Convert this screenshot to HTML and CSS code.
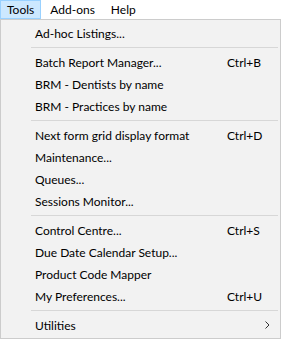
FILE: index.html
```html
<!DOCTYPE html>
<html>
<head>
<meta charset="utf-8">
<link rel="stylesheet" href="styles.css">
</head>
<body>
<div class="menubar">
  <div class="top active">Tools</div>
  <div class="top">Add-ons</div>
  <div class="top">Help</div>
</div>
<div class="dropdown">
  <div class="item"><span class="label">Ad-hoc Listings...</span><span class="key"></span></div>
  <div class="sep"></div>
  <div class="item"><span class="label">Batch Report Manager...</span><span class="key">Ctrl+B</span></div>
  <div class="item"><span class="label">BRM - Dentists by name</span><span class="key"></span></div>
  <div class="item"><span class="label">BRM - Practices by name</span><span class="key"></span></div>
  <div class="sep"></div>
  <div class="item"><span class="label">Next form grid display format</span><span class="key">Ctrl+D</span></div>
  <div class="item"><span class="label">Maintenance...</span><span class="key"></span></div>
  <div class="item"><span class="label">Queues...</span><span class="key"></span></div>
  <div class="item"><span class="label">Sessions Monitor...</span><span class="key"></span></div>
  <div class="sep"></div>
  <div class="item"><span class="label">Control Centre...</span><span class="key">Ctrl+S</span></div>
  <div class="item"><span class="label">Due Date Calendar Setup...</span><span class="key"></span></div>
  <div class="item"><span class="label">Product Code Mapper</span><span class="key"></span></div>
  <div class="item"><span class="label">My Preferences...</span><span class="key">Ctrl+U</span></div>
  <div class="sep"></div>
  <div class="item"><span class="label">Utilities</span><span class="key arrow"><svg width="5" height="8" viewBox="0 0 5 8"><path d="M0.5 0.5 L4 4 L0.5 7.5" fill="none" stroke="#333" stroke-width="1"/></svg></span></div>
</div>
</body>
</html>
```
FILE: styles.css
```css
html, body {
  margin: 0;
  padding: 0;
  background: #ffffff;
}
body {
  font-family: "Segoe UI", Lato, "Noto Sans", sans-serif;
  font-size: 12px;
  color: #000;
  width: 281px;
  height: 339px;
  overflow: hidden;
}
.menubar {
  display: flex;
  height: 19px;
  align-items: stretch;
}
.top {
  padding: 0 6px;
  line-height: 17px;
  border: 1px solid transparent;
  margin-right: 2px;
}
.top.active {
  background: #cce8ff;
  border-color: #99d1ff;
}
.dropdown {
  width: 279px;
  border: 1px solid #cccccc;
  background: #f2f2f2;
  padding: 2px 0;
  box-sizing: content-box;
}
.item {
  display: grid;
  grid-template-columns: 1fr 53px;
  height: 22px;
  align-items: center;
  padding-left: 34px;
}
.key {
  white-space: nowrap;
}
.arrow {
  padding-left: 38px;
  display: flex;
  align-items: center;
}
.sep {
  height: 7px;
  display: flex;
  align-items: center;
  padding-left: 30px;
  padding-right: 2px;
}
.sep::before {
  content: "";
  flex: 1;
  height: 1px;
  background: #d7d7d7;
}
```
